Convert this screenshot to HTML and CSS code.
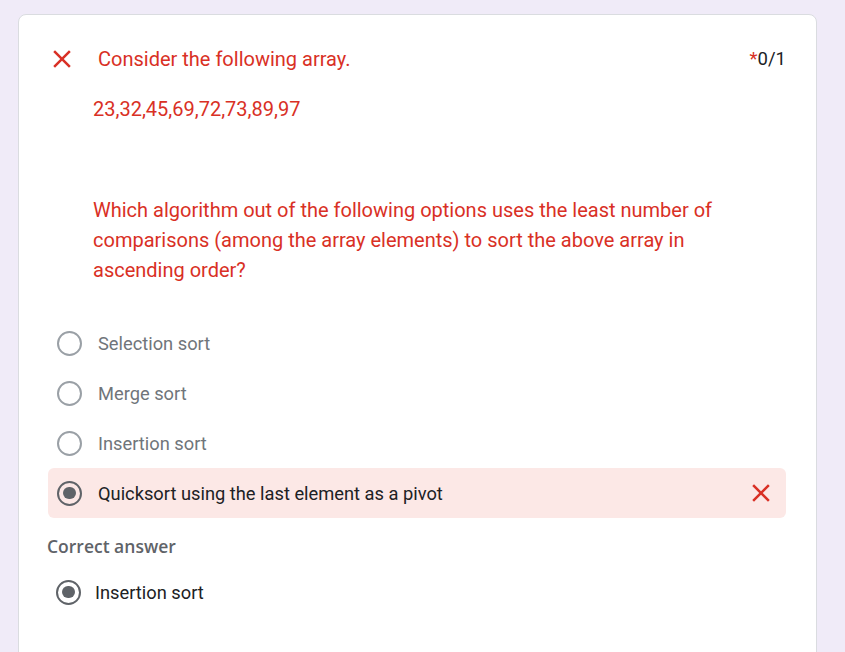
FILE: index.html
```html
<!DOCTYPE html>
<html>
<head>
<meta charset="utf-8">
<link rel="stylesheet" href="styles.css">
</head>
<body>
<div class="card">
  <div class="header">
    <svg class="icon-x" viewBox="0 0 24 24"><path d="M19 6.41L17.59 5 12 10.59 6.41 5 5 6.41 10.59 12 5 17.59 6.41 19 12 13.41 17.59 19 19 17.59 13.41 12z"/></svg>
    <div class="title">Consider the following array.</div>
    <div class="score"><span class="star">*</span>0/1</div>
  </div>
  <div class="body">
    <p class="array">23,32,45,69,72,73,89,97</p>
    <p class="question">Which algorithm out of the following options uses the least number of comparisons (among the array elements) to sort the above array in ascending order?</p>
  </div>
  <div class="options">
    <div class="option"><span class="radio"></span><span class="label">Selection sort</span></div>
    <div class="option"><span class="radio"></span><span class="label">Merge sort</span></div>
    <div class="option"><span class="radio"></span><span class="label">Insertion sort</span></div>
    <div class="option wrong"><span class="radio checked"></span><span class="label">Quicksort using the last element as a pivot</span>
      <svg class="icon-x small" viewBox="0 0 24 24"><path d="M19 6.41L17.59 5 12 10.59 6.41 5 5 6.41 10.59 12 5 17.59 6.41 19 12 13.41 17.59 19 19 17.59 13.41 12z"/></svg>
    </div>
  </div>
  <div class="correct-title">Correct answer</div>
  <div class="option correct"><span class="radio checked"></span><span class="label">Insertion sort</span></div>
</div>
</body>
</html>
```

FILE: styles.css
```css
html, body {
  margin: 0;
  padding: 0;
}
body {
  background: #f0ebf8;
  font-family: Roboto, "Liberation Sans", sans-serif;
  overflow: hidden;
  height: 652px;
}
.card {
  margin: 14px 0 0 18px;
  width: 738px;
  min-height: 700px;
  background: #fff;
  border: 1px solid #dadce0;
  border-radius: 8px;
  padding: 29px 30px 40px 29px;
}
.header {
  display: flex;
  align-items: center;
  height: 30px;
}
.icon-x {
  width: 30px;
  height: 30px;
  fill: #d93025;
  flex: none;
  margin-left: -1px;
}
.title {
  margin-left: 21px;
  font-size: 20px;
  line-height: 30px;
  color: #d93025;
  flex: 1;
}
.score {
  font-size: 18.5px;
  color: #202124;
  line-height: 30px;
}
.star {
  color: #d93025;
}
.body {
  padding-left: 45px;
  color: #d93025;
  font-size: 20px;
  line-height: 30px;
}
.body p {
  margin: 0;
}
.array {
  margin-top: 20px !important;
}
.question {
  margin-top: 71px !important;
  padding-right: 60px;
}
.options {
  margin-top: 33px;
}
.option {
  display: flex;
  align-items: center;
  height: 50px;
  padding-left: 9px;
  border-radius: 6px;
}
.radio {
  box-sizing: border-box;
  width: 25px;
  height: 25px;
  border-radius: 50%;
  border: 2.5px solid #9aa0a6;
  flex: none;
  display: flex;
  align-items: center;
  justify-content: center;
}
.radio.checked {
  border-color: #5f6368;
}
.radio.checked::after {
  content: "";
  width: 12.5px;
  height: 12.5px;
  border-radius: 50%;
  background: #5f6368;
}
.label {
  margin-left: 16px;
  font-size: 18.3px;
  color: #70757a;
  flex: 1;
}
.wrong {
  background: #fce8e6;
}
.wrong .label,
.correct .label {
  color: #202124;
}
.icon-x.small {
  margin-right: 10px;
}
.correct-title {
  margin-top: 16px;
  margin-left: -1px;
  font-family: "Open Sans", Roboto, sans-serif;
  font-size: 17.5px;
  line-height: 24px;
  font-weight: 600;
  color: #5f6368;
}
.correct {
  margin-top: 9px;
  padding-left: 8px;
}
.correct .label {
  margin-left: 14px;
}
```
